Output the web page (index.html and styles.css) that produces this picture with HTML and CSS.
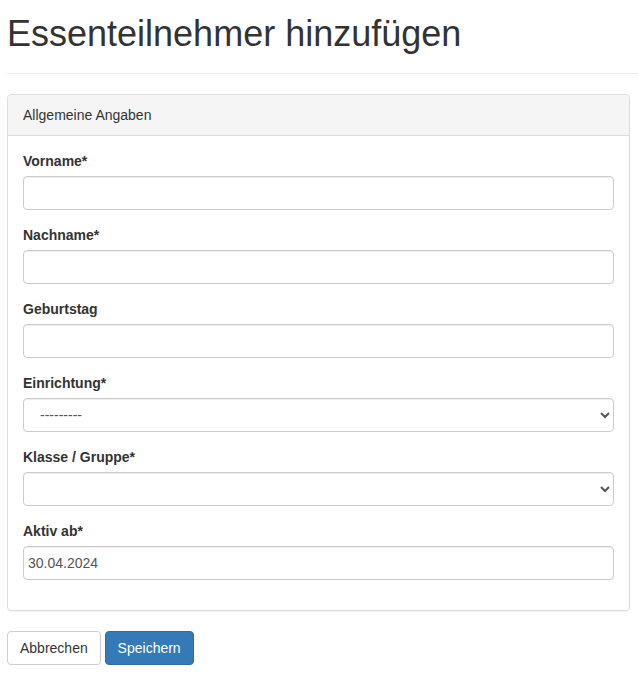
FILE: index.html
```html
<!DOCTYPE html>
<html lang="de">
<head>
  <meta charset="UTF-8">
  <title>Essenteilnehmer hinzufügen</title>
  <meta name="viewport" content="width=device-width, initial-scale=1.0">
  <link rel="stylesheet" href="styles.css">
</head>
<body>

  <div class="page-header">
    <h1>Essenteilnehmer hinzufügen</h1>
  </div>

  <form id="participantForm" method="post">
    <div class="panel">
      <div class="panel-heading">Allgemeine Angaben</div>
      <div class="panel-body">
        <div class="form-group">
          <label for="firstname">Vorname*</label>
          <input type="text" id="firstname" name="firstname" class="form-control">
        </div>
        <div class="form-group">
          <label for="lastname">Nachname*</label>
          <input type="text" id="lastname" name="lastname" class="form-control">
        </div>
        <div class="form-group">
          <label for="birthday">Geburtstag</label>
          <input type="text" id="birthday" name="birthday" class="form-control">
        </div>
        <div class="form-group">
          <label for="facility">Einrichtung*</label>
          <select id="facility" name="facility" class="form-control">
            <option>---------</option>
          </select>
        </div>
        <div class="form-group">
          <label for="group">Klasse / Gruppe*</label>
          <select id="group" name="group" class="form-control">
            <option></option>
          </select>
        </div>
        <div class="form-group">
          <label for="active">Aktiv ab*</label>
          <input type="text" id="active" name="active" class="form-control date-input" value="30.04.2024">
        </div>
      </div>
    </div>

    <div class="actions">
      <a href="#" class="btn btn-default">Abbrechen</a>
      <button type="submit" class="btn btn-primary">Speichern</button>
    </div>
  </form>

</body>
</html>
```

FILE: styles.css
```css
:root {
  --primary: #337ab7;
  --primary-border: #2e6da4;
  --border-color: #ccc;
  --panel-border: #ddd;
  --text: #333;
}

* {
  box-sizing: border-box;
}

body {
  margin: 0;
  padding: 0 0 0 7px;
  font-family: "Liberation Sans", Arial, sans-serif;
  font-size: 14px;
  line-height: 20px;
  color: var(--text);
  background-color: #fff;
}

.page-header {
  padding-bottom: 9px;
  margin-bottom: 20px;
  border-bottom: 1px solid #eee;
}

.page-header h1 {
  margin: 14px 0 10px 0;
  font-size: 36px;
  font-weight: 500;
  line-height: 1.1;
}

/* panel */
.panel {
  margin: 0 8px 20px 0;
  border: 1px solid var(--panel-border);
  border-radius: 4px;
  box-shadow: 0 1px 1px rgba(0, 0, 0, 0.05);
}

.panel-heading {
  padding: 10px 15px;
  background-color: #f5f5f5;
  border-bottom: 1px solid var(--panel-border);
  border-radius: 3px 3px 0 0;
}

.panel-body {
  padding: 15px;
}

.form-group {
  margin-bottom: 15px;
}

label {
  display: block;
  margin-bottom: 5px;
  font-weight: bold;
}

.form-control {
  display: block;
  width: 100%;
  height: 34px;
  padding: 6px 12px;
  font-family: inherit;
  font-size: 14px;
  line-height: 20px;
  color: #555;
  background-color: #fff;
  border: 1px solid var(--border-color);
  border-radius: 4px;
  box-shadow: inset 0 1px 1px rgba(0, 0, 0, 0.075);
}

.date-input {
  padding-left: 4px;
}

/* buttons */
.btn {
  display: inline-block;
  padding: 6px 12px;
  font-family: inherit;
  font-size: 14px;
  line-height: 20px;
  text-decoration: none;
  border: 1px solid transparent;
  border-radius: 4px;
  cursor: pointer;
}

.btn-default {
  color: var(--text);
  background-color: #fff;
  border-color: var(--border-color);
}

.btn-primary {
  color: #fff;
  background-color: var(--primary);
  border-color: var(--primary-border);
}
```
